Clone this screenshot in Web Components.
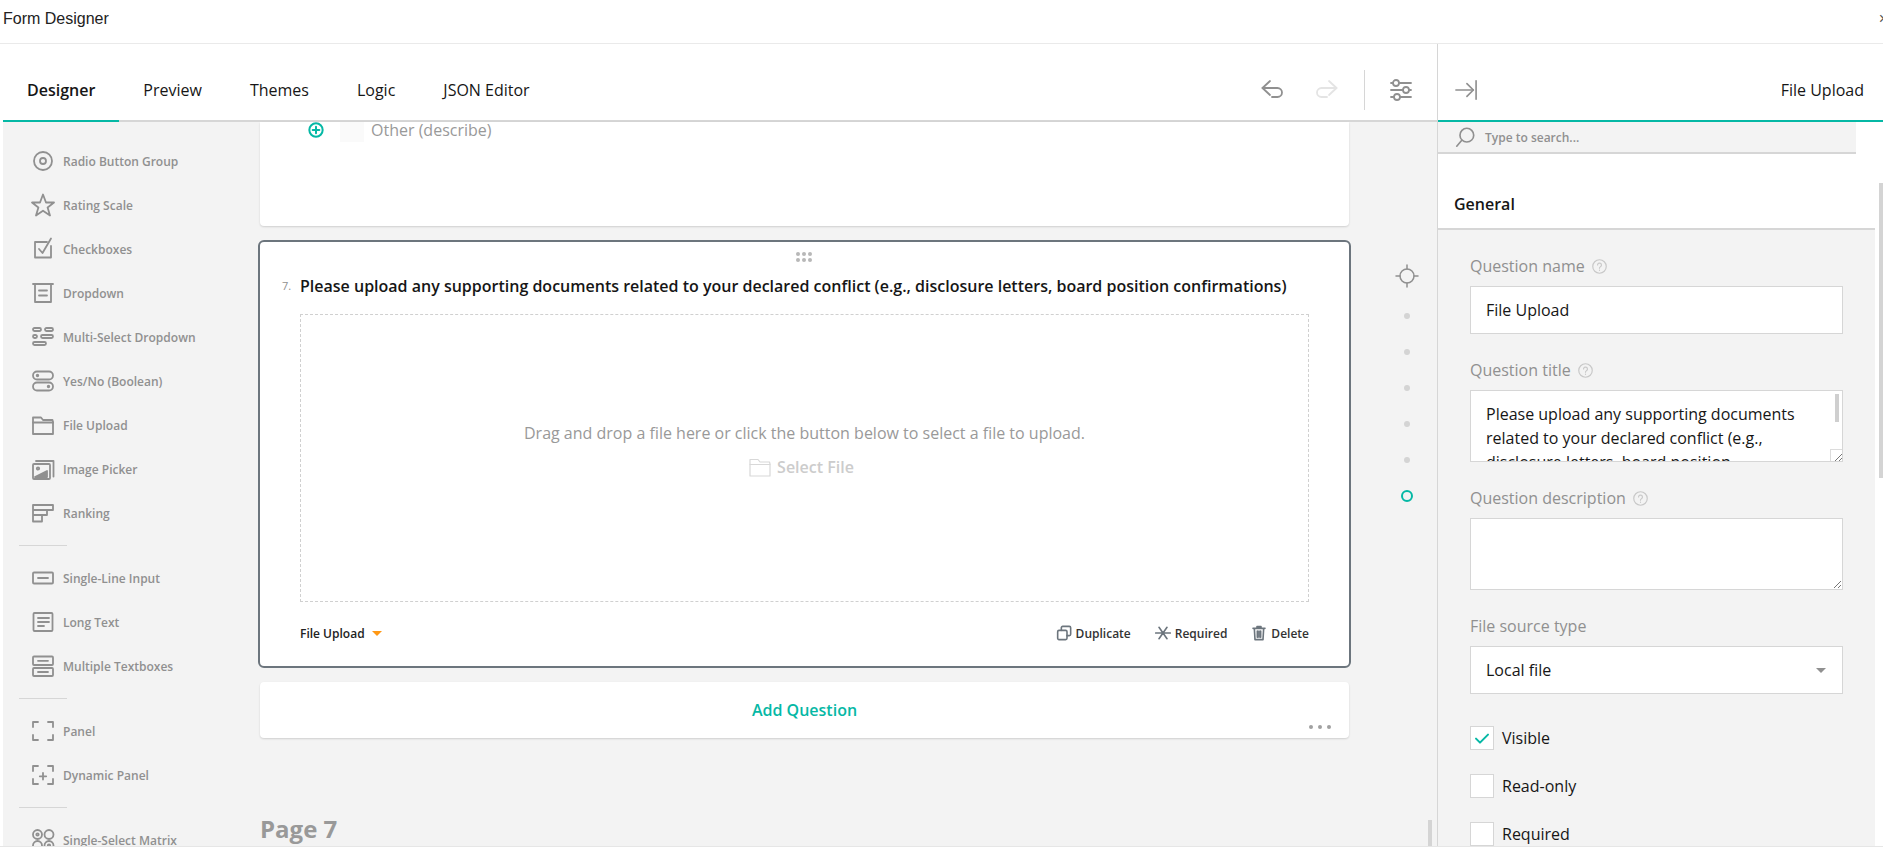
<!DOCTYPE html>
<html lang="en">
<head>
<meta charset="utf-8">
<title>Form Designer</title>
<style>
  html, body { margin: 0; height: 100%; background: #fff; overflow: hidden; }
  body { font-family: "Open Sans", "Liberation Sans", sans-serif; }
</style>
</head>
<body>
<fd-app>
  <fd-titlebar slot="title">Form Designer</fd-titlebar>

  <fd-tabs slot="tabs">
    <fd-tab active>Designer</fd-tab>
    <fd-tab>Preview</fd-tab>
    <fd-tab>Themes</fd-tab>
    <fd-tab>Logic</fd-tab>
    <fd-tab>JSON Editor</fd-tab>
    <fd-icon slot="actions" name="undo" size="24" color="#909090"></fd-icon>
    <fd-icon slot="actions" name="redo" size="24" color="#e4e4e4"></fd-icon>
    <fd-icon slot="settings" name="settings" size="24" color="#909090"></fd-icon>
  </fd-tabs>

  <fd-toolbox slot="toolbox">
    <fd-tool icon="radio">Radio Button Group</fd-tool>
    <fd-tool icon="star">Rating Scale</fd-tool>
    <fd-tool icon="checkbox">Checkboxes</fd-tool>
    <fd-tool icon="dropdown">Dropdown</fd-tool>
    <fd-tool icon="multiselect">Multi-Select Dropdown</fd-tool>
    <fd-tool icon="boolean">Yes/No (Boolean)</fd-tool>
    <fd-tool icon="folder">File Upload</fd-tool>
    <fd-tool icon="image">Image Picker</fd-tool>
    <fd-tool icon="ranking">Ranking</fd-tool>
    <fd-tool-separator></fd-tool-separator>
    <fd-tool icon="input">Single-Line Input</fd-tool>
    <fd-tool icon="longtext">Long Text</fd-tool>
    <fd-tool icon="multitext">Multiple Textboxes</fd-tool>
    <fd-tool-separator></fd-tool-separator>
    <fd-tool icon="panel">Panel</fd-tool>
    <fd-tool icon="dynpanel">Dynamic Panel</fd-tool>
    <fd-tool-separator></fd-tool-separator>
    <fd-tool icon="matrix">Single-Select Matrix</fd-tool>
  </fd-toolbox>

  <fd-canvas slot="canvas">
    <fd-other-card>Other (describe)</fd-other-card>
    <fd-question-card number="7." type="File Upload">
      <span slot="title">Please upload any supporting documents related to your declared conflict (e.g., disclosure letters, board position confirmations)</span>
      <fd-dropzone>Drag and drop a file here or click the button below to select a file to upload.</fd-dropzone>
      <fd-card-action slot="actions" icon="duplicate">Duplicate</fd-card-action>
      <fd-card-action slot="actions" icon="asterisk">Required</fd-card-action>
      <fd-card-action slot="actions" icon="trash">Delete</fd-card-action>
    </fd-question-card>
    <fd-add-question>Add Question</fd-add-question>
    <fd-page-title>Page 7</fd-page-title>
  </fd-canvas>

  <fd-page-nav slot="nav" count="5"></fd-page-nav>

  <fd-property-panel slot="panel" heading="File Upload" section="General">
    <fd-field label="Question name" help><fd-box>File Upload</fd-box></fd-field>
    <fd-field label="Question title" help>
      <fd-box multiline scrollbar>Please upload any supporting documents related to your declared conflict (e.g., disclosure letters, board position confirmations)</fd-box>
    </fd-field>
    <fd-field label="Question description" help><fd-box multiline></fd-box></fd-field>
    <fd-field label="File source type"><fd-box select>Local file</fd-box></fd-field>
    <fd-check checked>Visible</fd-check>
    <fd-check>Read-only</fd-check>
    <fd-check>Required</fd-check>
  </fd-property-panel>
</fd-app>

<script>
// Shapes are drawn on a 24x24 box, stroke comes from the fd-icon host
const ICONS = {
  undo: '<path d="M10 3 2.5 10l7.5 7"/><path d="M2.5 10H17.5a4.5 4.5 0 0 1 0 9H12"/>',
  redo: '<path d="M14 3l7.5 7-7.5 7"/><path d="M21.5 10H6.5a4.500 4.500 0 0 0 0 9H12"/>',
  settings: '<circle cx="7" cy="5" r="3"/><path d="M10 5h12"/><circle cx="17" cy="12" r="3"/><path d="M2 12h12"/><circle cx="8" cy="19" r="3"/><path d="M11 19h11M2 19h3M20 12h2M2 5h2"/>',
  collapse: '<path d="M1 12h19"/><path d="M13 5l7 7-7 7"/><path d="M23 2v20" />',
  search: '<circle cx="14" cy="10" r="7.500"/><path d="M8.500 15.500 3 22"/>',
  radio: '<circle cx="12" cy="12" r="9"/><circle cx="12" cy="12" r="3"/>',
  star: '<path d="M12 1.500l3 8h8l-6.400 5 2.400 8L12 17.700l-7 4.800 2.400-8L1 9.500h8z"/>',
  checkbox: '<path d="M20 9v11.500H4V5h12"/><path d="M8 12l3.500 4L20 1.500"/>',
  dropdown: '<path d="M2 3h20"/><path d="M4 3v18h16V3"/><path d="M8 9.500h8M8 14.500h8"/>',
  multiselect: '<rect x="2" y="3" width="8" height="3" rx="1.500"/><rect x="14" y="3" width="8" height="3" rx="1.500"/><rect x="2" y="10" width="4" height="3" rx="1.500"/><rect x="10" y="10" width="12" height="3" rx="1.500"/><rect x="2" y="17" width="13" height="3" rx="1.500"/>',
  boolean: '<rect x="2" y="2.500" width="20" height="8" rx="4"/><rect x="2" y="13.500" width="20" height="8" rx="4"/><circle cx="6.500" cy="6.500" r=".8"/><circle cx="17.500" cy="17.500" r=".8"/>',
  folder: '<path d="M2 21V4.500h8l2 2.500h9.500l.5 2v12z"/><path d="M2 9.500h20"/>',
  image: '<path d="M5 4h17.500v15.500"/><rect x="2" y="7" width="17" height="15" rx="1"/><circle cx="7" cy="11.500" r="1.200"/><path d="M4 20l12-6v6z" fill="currentColor"/>',
  ranking: '<path d="M2 4h20v5H2zM2 9v5h14V9M2 14v6.500h9V14"/>',
  input: '<rect x="2" y="6.500" width="20" height="11" rx="1"/><path d="M7 12h10"/>',
  longtext: '<rect x="2.500" y="3" width="19" height="18" rx="1"/><path d="M7 8h11M7 12h11M7 16h6"/>',
  multitext: '<rect x="2" y="2.500" width="20" height="8.500" rx="1"/><rect x="2" y="14" width="20" height="8" rx="1"/><path d="M7 6.800h10M7 18h10"/>',
  panel: '<path d="M2 8V3h5M17 3h5v5M22 16v5h-5M7 21H2v-5"/>',
  dynpanel: '<path d="M2 8V3h5M17 3h5v5M22 16v5h-5M7 21H2v-5"/><path d="M12 10v6.500M8.800 13.300h6.400"/>',
  matrix: '<circle cx="6.500" cy="6.500" r="4.500"/><circle cx="6.500" cy="6.500" r="1.200"/><circle cx="18" cy="6.500" r="4.500"/><circle cx="6.500" cy="17.500" r="4.500"/><circle cx="18" cy="17.500" r="4.500"/><circle cx="18" cy="17.500" r="1.200"/>',
  duplicate: '<rect x="2.500" y="8" width="14" height="14" rx="2"/><path d="M8 8V4a2 2 0 0 1 2-2h10a2 2 0 0 1 2 2v10a2 2 0 0 1-2 2h-3.500"/>',
  asterisk: '<path d="M1 12h22M6 3.500l12 17M18 3.500l-12 17"/>',
  trash: '<path d="M3 5h18M9 5V2.500h6V5M5 5l1 17h12l1-17M9.500 9v9.500M12 9v9.500M14.500 9v9.500"/>',
  plus: '<circle cx="12" cy="12" r="10"/><path d="M12 7v10M7 12h10"/>',
  crosshair: '<circle cx="12" cy="12" r="7"/><path d="M12 1v4M12 19v4M1 12h4M19 12h4"/>',
  check: '<path d="M3 13l6 6L21 7"/>',
};

// Base class: static styles + render() string into an open shadow root
class FdElement extends HTMLElement {
  constructor() {
    super();
    this.attachShadow({ mode: 'open' });
  }
  connectedCallback() {
    this.shadowRoot.innerHTML = `<style>${this.constructor.styles}</style>${this.render()}`;
  }
  render() {
    return '<slot></slot>';
  }
}

class FdIcon extends FdElement {
  static styles = `
    :host { display: inline-flex; flex: none; }
    svg { display: block; fill: none; stroke: currentColor; stroke-linecap: round; stroke-linejoin: round; }
  `;
  render() {
    const size = this.getAttribute('size') || 24;
    const width = this.getAttribute('stroke') || 1.8;
    this.style.color = this.getAttribute('color') || 'inherit';
    return `<svg width="${size}" height="${size}" viewBox="0 0 24 24" stroke-width="${width}">${ICONS[this.getAttribute('name')] || ''}</svg>`;
  }
}

class FdApp extends FdElement {
  static styles = `
    :host { display: flex; flex-direction: column; height: 846px; overflow: hidden; position: relative;
      border-bottom: 1px solid #e6e6e6; font-family: "Open Sans", "Liberation Sans", sans-serif; }
    .main { flex: 1; min-height: 0; display: flex; }
    .designer { flex: 1; min-width: 0; display: flex; flex-direction: column; padding-left: 3px; }
    .work { flex: 1; min-height: 0; display: flex; background: #f3f3f3; position: relative; }
    .thumb { position: absolute; left: 1425px; bottom: 0; width: 4px; height: 26px; background: #d4d4d4; }
  `;
  render() {
    return `
      <slot name="title"></slot>
      <div class="main">
        <div class="designer">
          <slot name="tabs"></slot>
          <div class="work">
            <slot name="toolbox"></slot>
            <slot name="canvas"></slot>
            <slot name="nav"></slot>
            <div class="thumb"></div>
          </div>
        </div>
        <slot name="panel"></slot>
      </div>`;
  }
}

class FdTitlebar extends FdElement {
  static styles = `
    :host { display: flex; align-items: center; justify-content: space-between; flex: none; height: 37px;
      border-bottom: 1px solid #eaeaea; padding: 0 0 6px 3px; overflow: hidden;
      font: 16px "Liberation Sans", Arial, sans-serif; color: #222; }
    .close { margin-right: -5px; font-size: 16px; color: #555; }
  `;
  render() {
    return '<slot></slot><span class="close">×</span>';
  }
}

class FdTabs extends FdElement {
  static styles = `
    :host { display: flex; flex: none; height: 61px; padding-top: 15px; border-bottom: 2px solid #d6d6d6; background: #fff; }
    .tabs { display: flex; flex: 1; margin-bottom: -2px; }
    .actions { display: flex; align-items: center; gap: 31px; }
    .sep { width: 1px; height: 40px; background: #d6d6d6; margin: 0 24px 0 25px; align-self: center; }
    .settings { display: flex; align-items: center; width: 48px; }
  `;
  render() {
    return `
      <div class="tabs"><slot></slot></div>
      <div class="actions"><slot name="actions"></slot></div>
      <div class="sep"></div>
      <div class="settings"><slot name="settings"></slot></div>`;
  }
}

class FdTab extends FdElement {
  static styles = `
    :host { display: flex; align-items: center; padding: 15px 24px 0; margin-top: -15px; font-size: 16px; color: #161616;
      border-bottom: 2px solid transparent; }
    :host([active]) { font-weight: 600; border-bottom-color: #05b8a5; }
  `;
}

class FdToolbox extends FdElement {
  static styles = `
    :host { display: block; flex: none; width: 257px; box-sizing: border-box; padding-top: 17px; overflow: hidden; }
  `;
}

class FdTool extends FdElement {
  static styles = `
    :host { display: flex; align-items: center; gap: 8px; height: 44px; padding-left: 28px;
      font-size: 12px; font-weight: 600; color: #909090; white-space: nowrap; }
  `;
  render() {
    return `<fd-icon name="${this.getAttribute('icon')}" size="24" color="#909090"></fd-icon><slot></slot>`;
  }
}

class FdToolSeparator extends FdElement {
  static styles = `
    :host { display: block; width: 48px; height: 1px; margin: 10px 0 10px 16px; background: #d6d6d6; }
  `;
  render() { return ''; }
}

class FdCanvas extends FdElement {
  static styles = `
    :host { display: flex; flex-direction: column; flex: none; width: 1089px; overflow: visible; }
  `;
}

class FdOtherCard extends FdElement {
  static styles = `
    :host { display: block; flex: none; height: 104px; background: #fff; border-radius: 0 0 4px 4px;
      box-shadow: 0 1px 2px rgba(0,0,0,.15); }
    .row { display: flex; align-items: center; height: 16px; padding-left: 48px; font-size: 16px; color: #999; }
    fd-icon { margin-right: 16px; }
    .box { width: 24px; height: 20px; align-self: flex-start; background: #fafafa; margin-right: 7px; }
  `;
  render() {
    return `<div class="row"><fd-icon name="plus" size="16" stroke="3" color="#05b8a5"></fd-icon><span class="box"></span><slot></slot></div>`;
  }
}

class FdQuestionCard extends FdElement {
  static styles = `
    :host { display: block; flex: none; box-sizing: border-box; width: 1093px; height: 428px; margin: 14px -2px;
      background: #fff; border: 2px solid #6c757d; border-radius: 6px; padding: 0 40px; position: relative; }
    .grip { position: absolute; left: 50%; top: 10px; margin-left: -9px; width: 16px; display: grid;
      grid-template-columns: repeat(3, 4px); gap: 2px 2px; }
    .grip i { width: 4px; height: 4px; border-radius: 50%; background: #b8b8b8; }
    .title { display: flex; margin-top: 32px; font-size: 16px; font-weight: 600; line-height: 24px; color: #161616; white-space: nowrap; }
    .num { width: 18px; margin-left: -18px; font-size: 11px; font-weight: 400; color: #909090; }
    .foot { display: flex; align-items: center; justify-content: space-between; height: 62px; }
    .type { display: flex; align-items: center; gap: 7px; font-size: 12px; font-weight: 600; color: #222; }
    .arrow { width: 0; height: 0; border: 5px solid transparent; border-top: 5px solid #ff9814; border-bottom: 0; }
    .actions { display: flex; gap: 24px; }
  `;
  render() {
    return `
      <div class="grip">${'<i></i>'.repeat(6)}</div>
      <div class="title"><span class="num">${this.getAttribute('number')}</span><slot name="title"></slot></div>
      <slot></slot>
      <div class="foot">
        <div class="type">${this.getAttribute('type')}<span class="arrow"></span></div>
        <div class="actions"><slot name="actions"></slot></div>
      </div>`;
  }
}

class FdDropzone extends FdElement {
  static styles = `
    :host { display: flex; flex-direction: column; align-items: center; justify-content: center; gap: 11px; box-sizing: border-box;
      height: 288px; margin-top: 16px; padding-bottom: 16px; border: 1px dashed #d0d0d0; font-size: 16px; color: #999; }
    .btn { display: flex; align-items: center; gap: 5px; font-weight: 600; color: #ccc; margin-right: 7px; }
  `;
  render() {
    return `<div><slot></slot></div>
      <div class="btn"><fd-icon name="folder" size="24" stroke="1.2" color="#d8d8d8"></fd-icon>Select File</div>`;
  }
}

class FdCardAction extends FdElement {
  static styles = `
    :host { display: flex; align-items: center; gap: 4px; font-size: 12px; font-weight: 600; color: #333; }
  `;
  render() {
    return `<fd-icon name="${this.getAttribute('icon')}" size="16" stroke="2.4" color="#6c757d"></fd-icon><slot></slot>`;
  }
}

class FdAddQuestion extends FdElement {
  static styles = `
    :host { display: flex; align-items: center; justify-content: center; flex: none; height: 56px; position: relative;
      background: #fff; border-radius: 4px; box-shadow: 0 1px 2px rgba(0,0,0,.15);
      font-size: 16px; font-weight: 600; color: #05b8a5; }
    .more { position: absolute; right: 18px; bottom: 9px; display: flex; gap: 5px; }
    .more i { width: 4px; height: 4px; border-radius: 50%; background: #a0a0a0; }
  `;
  render() {
    return `<slot></slot><div class="more"><i></i><i></i><i></i></div>`;
  }
}

class FdPageTitle extends FdElement {
  static styles = `
    :host { display: block; flex: none; margin-top: 75px; font-size: 24px; font-weight: 700; line-height: 32px; color: #999; }
  `;
}

class FdPageNav extends FdElement {
  static styles = `
    :host { display: flex; flex-direction: column; align-items: center; flex: none; width: 24px; margin-left: 46px; padding-top: 136px; }
    .item { display: flex; align-items: center; justify-content: center; height: 36px; }
    .first { margin-bottom: 4px; }
    .dot { width: 6px; height: 6px; border-radius: 50%; background: #d4d4d4; }
    .ring { width: 8px; height: 8px; border-radius: 50%; border: 2px solid #05b8a5; }
  `;
  render() {
    const dots = '<div class="item"><span class="dot"></span></div>'.repeat(+this.getAttribute('count'));
    return `<div class="item first"><fd-icon name="crosshair" size="24" stroke="1.5" color="#909090"></fd-icon></div>
      ${dots}<div class="item"><span class="ring"></span></div>`;
  }
}

class FdPropertyPanel extends FdElement {
  static styles = `
    :host { display: flex; flex-direction: column; flex: none; width: 446px; box-sizing: border-box; background: #fff;
      border-left: 1px solid #d6d6d6; position: relative; overflow: hidden; }
    .head { display: flex; align-items: center; justify-content: space-between; flex: none; height: 61px;
      padding: 15px 19px 0 17px; border-bottom: 2px solid #05b8a5; font-size: 16px; color: #161616; }
    .search { display: flex; align-items: center; gap: 5px; flex: none; height: 30px; margin-right: 27px; padding-left: 16px;
      background: #f3f3f3; border-bottom: 2px solid #d6d6d6; font-size: 12px; font-weight: 600; color: #909090; }
    .search span { margin-left: 4px; }
    .section { flex: none; height: 48px; margin-right: 8px; padding: 26px 0 0 16px; display: flex; align-items: center;
      border-bottom: 2px solid #d6d6d6; font-size: 16px; font-weight: 600; color: #161616; }
    .body { flex: 1; min-height: 0; margin-right: 8px; padding: 24px 32px 0; background: #f3f3f3; overflow: hidden; }
    .thumb { position: absolute; right: 0; top: 139px; width: 4px; height: 295px; background: #d4d4d4; }
  `;
  render() {
    return `
      <div class="head"><fd-icon name="collapse" size="22" stroke="1.8" color="#909090"></fd-icon><span>${this.getAttribute('heading')}</span></div>
      <div class="search"><fd-icon name="search" size="22" stroke="1.8" color="#909090"></fd-icon><span>Type to search...</span></div>
      <div class="section">${this.getAttribute('section')}</div>
      <div class="body"><slot></slot></div>
      <div class="thumb"></div>`;
  }
}

class FdField extends FdElement {
  static styles = `
    :host { display: block; margin-bottom: 24px; }
    .label { display: flex; align-items: center; gap: 7px; height: 24px; margin-bottom: 8px; font-size: 16px; color: #909090; }
    svg { display: block; fill: none; stroke: #c8c8c8; stroke-width: 1.1; stroke-linecap: round; }
  `;
  render() {
    const help = this.hasAttribute('help')
      ? '<svg width="15" height="15" viewBox="0 0 14 14"><circle cx="7" cy="7" r="6.300"/><path d="M5.200 5.600a1.800 1.800 0 1 1 2.800 1.500c-.7.500-1 .8-1 1.500M7 10.300v.3"/></svg>'
      : '';
    return `<div class="label">${this.getAttribute('label')}${help}</div><slot></slot>`;
  }
}

class FdBox extends FdElement {
  static styles = `
    :host { display: flex; align-items: center; justify-content: space-between; box-sizing: border-box; width: 373px; height: 48px; padding: 0 16px 0 15px;
      background: #fff; border: 1.5px solid #d6d6d6; font-size: 16px; color: #161616; position: relative; overflow: hidden; }
    :host([multiline]) { display: block; height: 72px; padding: 11px 36px 0 15px; line-height: 24px; }
    .caret { width: 0; height: 0; border: 5px solid transparent; border-top: 5px solid #909090; border-bottom: 0; }
    .bar { position: absolute; right: 3px; top: 3px; width: 4px; height: 28px; background: #cfcfcf; }
    .grip { position: absolute; right: 0; bottom: 0; width: 12px; height: 12px; background: #fff; }
    .grip svg { display: block; stroke: #777; stroke-width: 1; }
    .scrolled { border-left: 1px solid #dcdcdc; border-top: 1px solid #dcdcdc; box-sizing: border-box; }
  `;
  render() {
    const grip = this.hasAttribute('multiline')
      ? `<span class="grip ${this.hasAttribute('scrollbar') ? 'scrolled' : ''}"><svg width="12" height="12" viewBox="0 0 12 12"><path d="M4 11l7-7M8 11l3-3"/></svg></span>`
      : '';
    const bar = this.hasAttribute('scrollbar') ? '<span class="bar"></span>' : '';
    const caret = this.hasAttribute('select') ? '<span class="caret"></span>' : '';
    return `<slot></slot>${caret}${bar}${grip}`;
  }
}

class FdCheck extends FdElement {
  static styles = `
    :host { display: flex; align-items: center; gap: 8px; height: 24px; margin-bottom: 24px; font-size: 16px; color: #161616; }
    :host([checked]) { margin-top: 32px; }
    .box { display: flex; align-items: center; justify-content: center; box-sizing: border-box; width: 24px; height: 24px;
      background: #fff; border: 1.5px solid #d6d6d6; }
  `;
  render() {
    const tick = this.hasAttribute('checked')
      ? '<fd-icon name="check" size="16" stroke="3" color="#05b8a5"></fd-icon>' : '';
    return `<span class="box">${tick}</span><slot></slot>`;
  }
}

customElements.define('fd-icon', FdIcon);
customElements.define('fd-app', FdApp);
customElements.define('fd-titlebar', FdTitlebar);
customElements.define('fd-tabs', FdTabs);
customElements.define('fd-tab', FdTab);
customElements.define('fd-toolbox', FdToolbox);
customElements.define('fd-tool', FdTool);
customElements.define('fd-tool-separator', FdToolSeparator);
customElements.define('fd-canvas', FdCanvas);
customElements.define('fd-other-card', FdOtherCard);
customElements.define('fd-question-card', FdQuestionCard);
customElements.define('fd-dropzone', FdDropzone);
customElements.define('fd-card-action', FdCardAction);
customElements.define('fd-add-question', FdAddQuestion);
customElements.define('fd-page-title', FdPageTitle);
customElements.define('fd-page-nav', FdPageNav);
customElements.define('fd-property-panel', FdPropertyPanel);
customElements.define('fd-field', FdField);
customElements.define('fd-box', FdBox);
customElements.define('fd-check', FdCheck);
</script>
</body>
</html>
